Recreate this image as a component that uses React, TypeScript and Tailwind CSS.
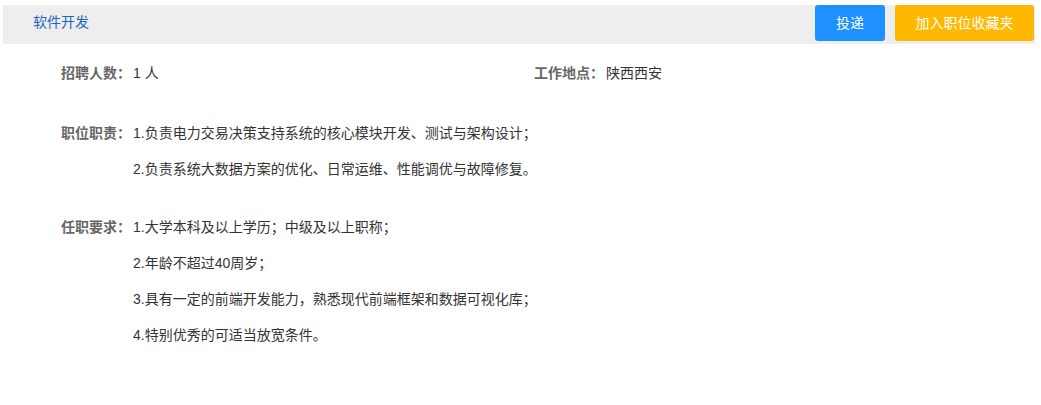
const font = { fontFamily: '"Liberation Sans", "Noto Sans CJK SC", sans-serif' };

const duties = [
  "1.负责电力交易决策支持系统的核心模块开发、测试与架构设计；",
  "2.负责系统大数据方案的优化、日常运维、性能调优与故障修复。",
];

const requirements = [
  "1.大学本科及以上学历；中级及以上职称；",
  "2.年龄不超过40周岁；",
  "3.具有一定的前端开发能力，熟悉现代前端框架和数据可视化库；",
  "4.特别优秀的可适当放宽条件。",
];

function Field({ label, lines }: { label: string; lines: string[] }) {
  return (
    <div className="flex">
      <div className="w-[72px] shrink-0 font-bold text-[#666] leading-[36px]">{label}</div>
      <div className="flex flex-col">
        {lines.map((l) => (
          <div key={l} className="leading-[36px] text-[#333]">
            {l}
          </div>
        ))}
      </div>
    </div>
  );
}

export default function App() {
  return (
    <div className="w-[1041px] h-[405px] bg-white text-[14px]" style={font}>
      {/* header bar */}
      <div className="ml-[3px] mr-[6px] mt-[5px] h-[39px] bg-[#eeeeee] flex items-start justify-between">
        <div className="pl-[30px] leading-[35px] text-[#2266bb]">软件开发</div>
        <div className="flex gap-[10px]">
          <button className="w-[70px] h-[36px] rounded-[3px] bg-[#1e90ff] text-white">投递</button>
          <button className="w-[139px] h-[36px] rounded-[3px] bg-[#ffb800] text-white mr-[1px]">加入职位收藏夹</button>
        </div>
      </div>

      <div className="pl-[61px] mt-[11px]">
        <div className="flex">
          <div className="w-[473px]">
            <Field label="招聘人数：" lines={["1 人"]} />
          </div>
          <Field label="工作地点：" lines={["陕西西安"]} />
        </div>

        <div className="mt-[24px]">
          <Field label="职位职责：" lines={duties} />
        </div>

        <div className="mt-[22px]">
          <Field label="任职要求：" lines={requirements} />
        </div>
      </div>
    </div>
  );
}
